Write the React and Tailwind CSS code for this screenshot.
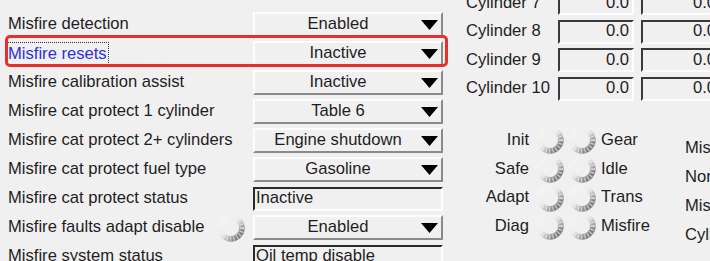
import React from 'react';

const rows = [
  { label: 'Misfire detection', kind: 'select', value: 'Enabled' },
  { label: 'Misfire resets', kind: 'select', value: 'Inactive', focused: true },
  { label: 'Misfire calibration assist', kind: 'select', value: 'Inactive' },
  { label: 'Misfire cat protect 1 cylinder', kind: 'select', value: 'Table 6' },
  { label: 'Misfire cat protect 2+ cylinders', kind: 'select', value: 'Engine shutdown' },
  { label: 'Misfire cat protect fuel type', kind: 'select', value: 'Gasoline' },
  { label: 'Misfire cat protect status', kind: 'text', value: 'Inactive' },
  { label: 'Misfire faults adapt disable', kind: 'select', value: 'Enabled', led: true },
  { label: 'Misfire system status', kind: 'text', value: 'Oil temp disable' }
];

const cylinders = ['Cylinder 7', 'Cylinder 8', 'Cylinder 9', 'Cylinder 10'];

const flags = [
  ['Init', 'Gear'],
  ['Safe', 'Idle'],
  ['Adapt', 'Trans'],
  ['Diag', 'Misfire']
];

const sideLabels = ['Misfire', 'None', 'Misfire', 'Cylinder'];

const Led = () => (
  <svg width="30" height="30" viewBox="0 0 30 30" className="shrink-0">
    <defs>
      <linearGradient id="ledRing" x1="0.15" y1="0.15" x2="0.85" y2="0.85">
        <stop offset="0%" stopColor="#f3f3f3" />
        <stop offset="45%" stopColor="#ececec" />
        <stop offset="75%" stopColor="#b4b4b4" />
        <stop offset="100%" stopColor="#7e7e7e" />
      </linearGradient>
    </defs>
    <circle cx="15" cy="15" r="11" fill="none" stroke="url(#ledRing)" strokeWidth="5" />
    <circle cx="15" cy="15" r="11" fill="none" stroke="#f0f0f0" strokeWidth="5" strokeDasharray="1 2.4" opacity="0.75" />
    <circle cx="15" cy="15" r="13.5" fill="none" stroke="url(#ledRing)" strokeWidth="0.8" opacity="0.7" />
    <circle cx="15" cy="15" r="8.5" fill="none" stroke="url(#ledRing)" strokeWidth="0.8" opacity="0.7" />
  </svg>
);

const Select = ({ value }) => (
  <div className="w-[190px] h-[25px] flex items-center bg-[#f0f0f0] border-2 border-t-[#fdfdfd] border-l-[#fdfdfd] border-r-[#8a8a8a] border-b-[#8a8a8a]">
    <span className="flex-1 text-center leading-none whitespace-nowrap">{value}</span>
    <svg width="17" height="10" viewBox="0 0 17 10" className="mr-[3px] shrink-0">
      <polygon points="0,0 17,0 8.5,10" fill="#000" />
    </svg>
  </div>
);

const TextBox = ({ value }) => (
  <div className="w-[190px] h-[24px] flex items-center bg-[#f0f0f0] border-2 border-t-[#2a2a2a] border-l-[#2a2a2a] border-r-[#fdfdfd] border-b-[#fdfdfd] pl-[1px]">
    <span className="leading-none whitespace-nowrap">{value}</span>
  </div>
);

const ValueBox = ({ value, width }) => (
  <div className={`${width} h-[24px] shrink-0 flex items-center justify-end pr-[3px] bg-[#f0f0f0] border-2 border-t-[#3a3a3a] border-l-[#3a3a3a] border-r-[#fdfdfd] border-b-[#fdfdfd]`}>
    <span className="leading-none">{value}</span>
  </div>
);

const App = () => {
  return (
    <div className="relative w-[710px] h-[261px] overflow-hidden bg-[#f0f0f0] text-[16.6px] text-[#1e1e1e] font-['Liberation_Sans',Arial,sans-serif] flex">
      {/* Settings list */}
      <div className="w-[450px] shrink-0 pl-2 pt-[10px]">
        {rows.map((row) => (
          <div key={row.label} className="h-[29px] flex items-center">
            <div className="w-[245px] shrink-0 flex items-center">
              {row.focused ? (
                <span className="text-[#3030d8] outline-1 outline-dotted outline-[#333] px-[1px] -ml-[1px] leading-[21px]">
                  {row.label}
                </span>
              ) : (
                <span className="whitespace-nowrap">{row.label}</span>
              )}
              {row.led && (
                <span className="ml-auto mr-[7px]">
                  <Led />
                </span>
              )}
            </div>
            {row.kind === 'select' ? <Select value={row.value} /> : <TextBox value={row.value} />}
          </div>
        ))}
      </div>

      {/* Cylinder values + status flags */}
      <div className="flex-1 min-w-0">
        <div className="-mt-[11px] pl-4">
          {cylinders.map((c) => (
            <div key={c} className="h-[28.5px] flex items-center">
              <span className="w-[92px] shrink-0 whitespace-nowrap">{c}</span>
              <ValueBox value="0.0" width="w-[76px]" />
              <div className="ml-[7px]">
                <ValueBox value="0.0" width="w-[80px]" />
              </div>
            </div>
          ))}
        </div>

        <div className="flex mt-[23px]">
          <div>
            {flags.map(([left, right]) => (
              <div key={left} className="h-[28.7px] flex items-center">
                <span className="w-[79px] text-right">{left}</span>
                <span className="ml-[6px]">
                  <Led />
                </span>
                <span className="ml-[2px]">
                  <Led />
                </span>
                <span className="ml-[4px] w-[84px]">{right}</span>
              </div>
            ))}
          </div>
          <div className="mt-[8px]">
            {sideLabels.map((s, i) => (
              <div key={i} className="h-[29px] flex items-center whitespace-nowrap">
                {s}
              </div>
            ))}
          </div>
        </div>
      </div>

      {/* Annotation highlight */}
      <div className="absolute left-[5px] top-[35px] w-[443px] h-[32px] border-[3px] border-[#e8302a] rounded-[5px] pointer-events-none" />
    </div>
  );
};

export default App;
